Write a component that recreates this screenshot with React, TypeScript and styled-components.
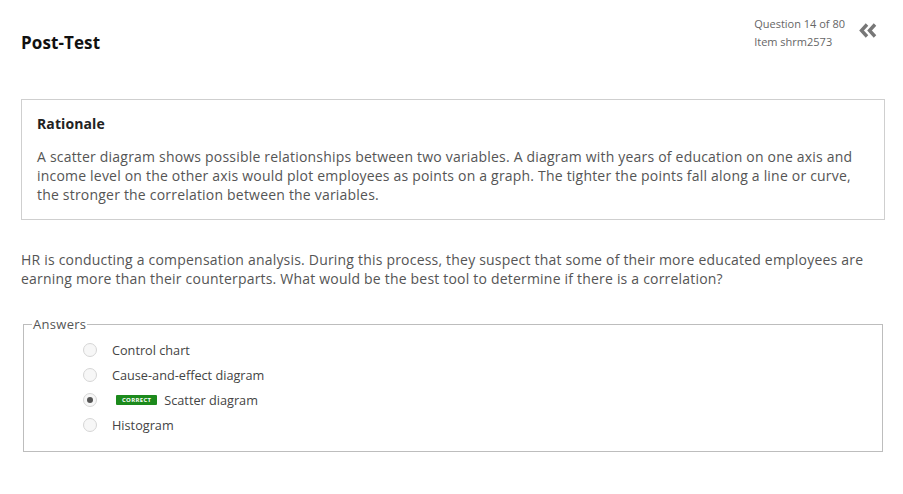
import React from "react";
import styled, { createGlobalStyle } from "styled-components";

const Global = createGlobalStyle`
  html, body { margin: 0; padding: 0; background: #fff; }
  body { font-family: "Open Sans", "Noto Sans", sans-serif; color: #555; }
`;

const Page = styled.div`
  padding: 0 18px 0 21px;
`;

const Header = styled.header`
  display: flex;
  justify-content: space-between;
  align-items: flex-start;
  height: 99px;
`;

const Title = styled.h1`
  margin: 31px 0 0;
  font-size: 17px;
  font-weight: 700;
  color: #111;
  line-height: 23px;
  letter-spacing: 0.1px;
`;

const Meta = styled.div`
  display: flex;
  align-items: flex-start;
  gap: 14px;
  margin-top: 15px;
  margin-right: 8px;
`;

const MetaText = styled.div`
  font-size: 11px;
  line-height: 18px;
  color: #666;
`;

const Collapse = styled.button`
  border: none;
  background: none;
  padding: 0;
  margin-top: 8px;
  cursor: pointer;
  display: flex;
`;

const RationaleBox = styled.section`
  border: 1px solid #cfcfcf;
  padding: 14px 15px 15px 15px;
`;

const BoxTitle = styled.h2`
  margin: 0 0 13px;
  font-size: 14px;
  font-weight: 700;
  color: #222;
  line-height: 20px;
  letter-spacing: 0.1px;
`;

const Paragraph = styled.p<{ $mt?: number }>`
  margin: ${(p) => p.$mt ?? 0}px 0 0;
  font-size: 14px;
  line-height: 19px;
  letter-spacing: 0.2px;
  color: #555;
`;

const Fieldset = styled.fieldset`
  margin: 28px 2px 0 2px;
  border: 1px solid #bdbdbd;
  padding: 5px 0 14px 59px;
  width: 860px;
  box-sizing: border-box;
`;

const Legend = styled.legend`
  font-size: 13px;
  letter-spacing: 0.3px;
  color: #555;
  padding: 0 1px;
  margin-left: -51px;
  line-height: 16px;
`;

const Option = styled.label`
  display: flex;
  align-items: center;
  height: 25px;
  font-size: 12.7px;
  color: #444;
  gap: 8px;
`;

const Radio = styled.span<{ $checked?: boolean }>`
  width: 14px;
  height: 14px;
  border-radius: 50%;
  border: 1px solid #d6d6d6;
  background: #f7f7f7;
  box-sizing: border-box;
  display: flex;
  align-items: center;
  justify-content: center;
  margin-right: 7px;
  &::after {
    content: "";
    display: ${(p) => (p.$checked ? "block" : "none")};
    width: 6px;
    height: 6px;
    border-radius: 50%;
    background: #555;
  }
`;

const Badge = styled.span`
  background: #1c8a1c;
  color: #fff;
  font-size: 6px;
  font-weight: 700;
  letter-spacing: 0.3px;
  padding: 0 6px;
  height: 10px;
  line-height: 10px;
  border-radius: 1px;
  margin-left: 4px;
  margin-right: -1px;
`;

const answers = [
  { text: "Control chart" },
  { text: "Cause-and-effect diagram" },
  { text: "Scatter diagram", correct: true },
  { text: "Histogram" },
];

export default function App() {
  return (
    <>
      <Global />
      <Page>
        <Header>
          <Title>Post-Test</Title>
          <Meta>
            <MetaText>
              Question 14 of 80
              <br />
              Item shrm2573
            </MetaText>
            <Collapse aria-label="collapse">
              <svg width="18" height="15" viewBox="0 0 18 15">
                <path d="M8 1.5 L2.5 7.5 L8 13.5" fill="none" stroke="#777" strokeWidth="3.4" />
                <path d="M16 1.5 L10.5 7.5 L16 13.5" fill="none" stroke="#777" strokeWidth="3.4" />
              </svg>
            </Collapse>
          </Meta>
        </Header>
        <RationaleBox>
          <BoxTitle>Rationale</BoxTitle>
          <Paragraph>
            A scatter diagram shows possible relationships between two variables. A diagram with years of education on one axis and income level on the other axis would plot employees as points on a graph. The tighter the points fall along a line or curve, the stronger the correlation between the variables.
          </Paragraph>
        </RationaleBox>
        <Paragraph $mt={30}>
          HR is conducting a compensation analysis. During this process, they suspect that some of their more educated employees are earning more than their counterparts. What would be the best tool to determine if there is a correlation?
        </Paragraph>
        <Fieldset>
          <Legend>Answers</Legend>
          {answers.map((a) => (
            <Option key={a.text}>
              <Radio $checked={a.correct} />
              {a.correct && <Badge>CORRECT</Badge>}
              {a.text}
            </Option>
          ))}
        </Fieldset>
      </Page>
    </>
  );
}
